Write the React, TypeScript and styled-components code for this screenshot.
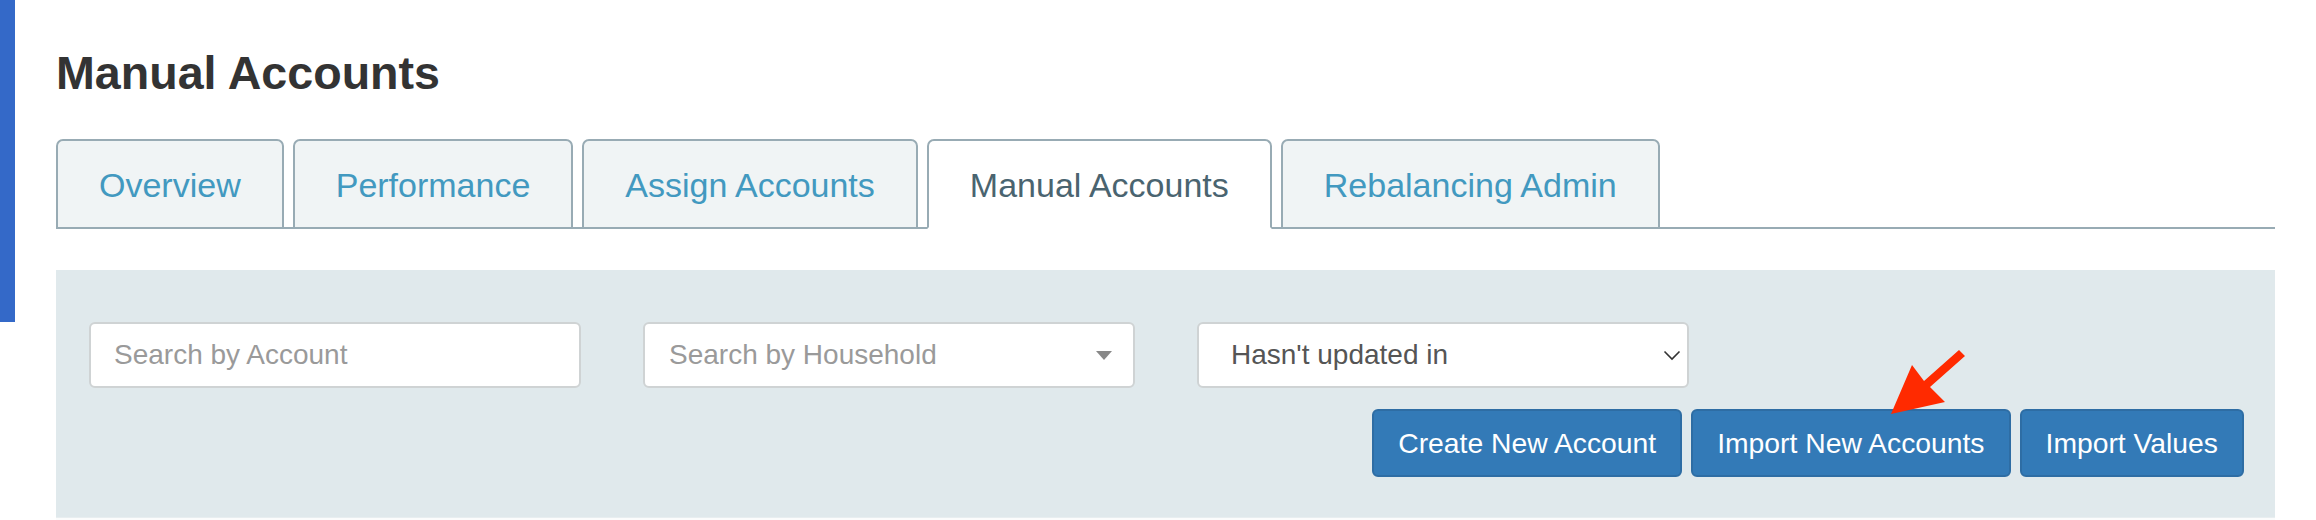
import React from "react";
import styled, { createGlobalStyle } from "styled-components";

const GlobalStyle = createGlobalStyle`
  html, body { margin: 0; padding: 0; background: #ffffff; }
  body { font-family: "Liberation Sans", Arial, Helvetica, sans-serif; }
  *, *::before, *::after { box-sizing: border-box; }
`;

const Page = styled.div`
  position: relative;
  display: flex;
  align-items: flex-start;
  width: 2316px;
  height: 520px;
  overflow: hidden;
  background: #ffffff;
`;

const SideEdge = styled.div`
  flex: 0 0 15px;
  height: 322px;
  background: #3469c8;
`;

const Main = styled.main`
  flex: 1;
  padding: 0 41px;
`;

const Title = styled.h1`
  margin: 50px 0 0;
  font-size: 46.6px;
  line-height: 46px;
  font-weight: 700;
  color: #333333;
`;

const TabList = styled.ul`
  display: flex;
  gap: 9px;
  margin: 43px 0 0;
  padding: 0;
  list-style: none;
  border-bottom: 2px solid #98abb4;
`;

const Tab = styled.li<{ $active?: boolean }>`
  margin-bottom: -2px;
  padding: 24px 41px 22px;
  border: 2px solid #98abb4;
  border-bottom-color: ${(p) => (p.$active ? "#ffffff" : "#98abb4")};
  border-radius: 7px 7px 0 0;
  background: ${(p) => (p.$active ? "#ffffff" : "#f0f4f5")};
  color: ${(p) => (p.$active ? "#4a6470" : "#4299c0")};
  font-size: 34px;
  line-height: 40px;
  white-space: nowrap;
`;

const Panel = styled.section`
  margin-top: 41px;
  padding: 52px 31px 40px 33px;
  background: #e0e9ec;
`;

const FilterRow = styled.div`
  display: flex;
  gap: 62px;
`;

const fieldBase = `
  width: 492px;
  height: 66px;
  border: 2px solid #cfd3d4;
  border-radius: 6px;
  background: #ffffff;
  font-family: "Liberation Sans", Arial, Helvetica, sans-serif;
  font-size: 28px;
`;

const SearchInput = styled.input`
  ${fieldBase}
  padding: 0 0 0 23px;
  color: #555555;
  outline: none;
  &::placeholder {
    color: #9a9a9a;
  }
`;

const SelectBox = styled.div<{ $placeholder?: boolean; $padLeft: number; $padRight: number }>`
  ${fieldBase}
  display: flex;
  align-items: center;
  justify-content: space-between;
  padding: 0 ${(p) => p.$padRight}px 0 ${(p) => p.$padLeft}px;
  color: ${(p) => (p.$placeholder ? "#9a9a9a" : "#555555")};
`;

const ButtonRow = styled.div`
  display: flex;
  justify-content: flex-end;
  gap: 9px;
  margin-top: 21px;
`;

const Button = styled.button`
  height: 68px;
  padding: 0 24px;
  border: 2px solid #2e6da4;
  border-radius: 6px;
  background: #337ab7;
  color: #ffffff;
  font-family: "Liberation Sans", Arial, Helvetica, sans-serif;
  font-size: 28.3px;
  white-space: nowrap;
`;

const TableTop = styled.div`
  height: 6px;
  border-top: 1px solid #e8eef0;
  background: #fbfcfc;
`;

const Arrow = styled.svg`
  position: absolute;
  left: 1870px;
  top: 340px;
  width: 110px;
  height: 90px;
  overflow: visible;
`;

const tabs = [
  "Overview",
  "Performance",
  "Assign Accounts",
  "Manual Accounts",
  "Rebalancing Admin",
];

export default function App() {
  return (
    <>
      <GlobalStyle />
      <Page>
        <SideEdge />
        <Main>
          <Title>Manual Accounts</Title>
          <TabList>
            {tabs.map((t) => (
              <Tab key={t} $active={t === "Manual Accounts"}>
                {t}
              </Tab>
            ))}
          </TabList>
          <Panel>
            <FilterRow>
              <SearchInput placeholder="Search by Account" />
              <SelectBox $placeholder $padLeft={24} $padRight={21}>
                <span>Search by Household</span>
                <svg width="16" height="9" viewBox="0 0 16 9">
                  <path d="M0 0 L16 0 L8 9 Z" fill="#888888" />
                </svg>
              </SelectBox>
              <SelectBox $padLeft={32} $padRight={6}>
                <span>Hasn't updated in</span>
                <svg width="18" height="11" viewBox="0 0 18 11">
                  <path
                    d="M1.5 1.5 L9 9 L16.5 1.5"
                    fill="none"
                    stroke="#333333"
                    strokeWidth="1.6"
                  />
                </svg>
              </SelectBox>
            </FilterRow>
            <ButtonRow>
              <Button>Create New Account</Button>
              <Button>Import New Accounts</Button>
              <Button>Import Values</Button>
            </ButtonRow>
          </Panel>
          <TableTop />
        </Main>
        <Arrow viewBox="0 0 110 90">
          <polygon
            points="21,74 42,25 54,41 89,10 95,16 60,47 75,62"
            fill="#ff2a00"
          />
        </Arrow>
      </Page>
    </>
  );
}
